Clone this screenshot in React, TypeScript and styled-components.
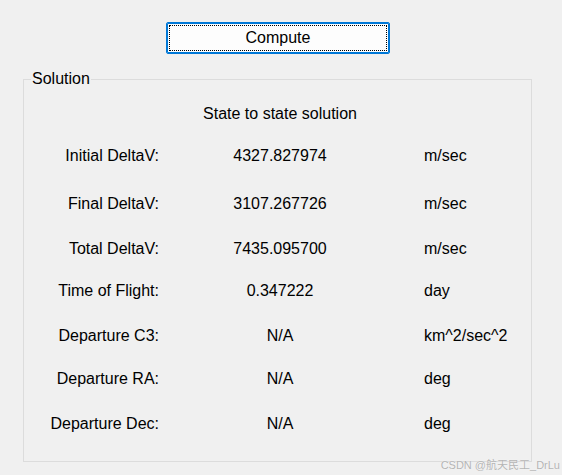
import React from 'react';
import styled, { createGlobalStyle } from 'styled-components';

const GlobalStyle = createGlobalStyle`
  html, body {
    margin: 0;
    padding: 0;
    background: #f0f0f0;
  }
  body {
    font-family: "Liberation Sans", Arial, sans-serif;
    font-size: 16px;
    color: #000;
  }
`;

const Window = styled.div`
  position: relative;
  width: 562px;
  height: 475px;
  padding: 22px 0 0 23px;
  box-sizing: border-box;
  overflow: hidden;
`;

const ComputeButton = styled.button`
  display: block;
  margin-left: 143px;
  width: 224px;
  height: 32px;
  background: #fdfdfd;
  border: 1px solid #0078d7;
  box-shadow: inset 0 0 0 1px #0078d7;
  border-radius: 2px;
  outline: 1px dotted #000;
  outline-offset: -4px;
  font-family: "Liberation Sans", Arial, sans-serif;
  font-size: 16px;
  color: #000;
  padding: 0;
  cursor: pointer;
`;

const GroupBox = styled.fieldset`
  margin: 16px 0 0 0;
  width: 509px;
  box-sizing: border-box;
  border: 1px solid #dcdcdc;
  border-radius: 0;
  padding: 16px 0 27px 0;
`;

const Legend = styled.legend`
  margin-left: 7px;
  padding: 0 1px;
  font-size: 16px;
  line-height: 18px;
`;

const Grid = styled.div`
  display: grid;
  grid-template-columns: 135px 242px 1fr;
  line-height: 20px;
`;

const Header = styled.div`
  grid-column: 2;
  text-align: center;
`;

const Label = styled.div<{ $top: number }>`
  grid-column: 1;
  text-align: right;
  margin-top: ${(p) => p.$top}px;
  white-space: nowrap;
`;

const Value = styled.div<{ $top: number }>`
  grid-column: 2;
  text-align: center;
  margin-top: ${(p) => p.$top}px;
`;

const Unit = styled.div<{ $top: number }>`
  grid-column: 3;
  padding-left: 23px;
  margin-top: ${(p) => p.$top}px;
  white-space: nowrap;
`;

const Watermark = styled.div`
  position: absolute;
  right: 2px;
  bottom: 3px;
  font-family: "Liberation Sans", "Noto Sans CJK SC", sans-serif;
  font-size: 11px;
  color: #b4b4b4;
  text-shadow: 0 0 1px #fff;
`;

const rows = [
  { label: 'Initial DeltaV:', value: '4327.827974', unit: 'm/sec', top: 22 },
  { label: 'Final DeltaV:', value: '3107.267726', unit: 'm/sec', top: 28 },
  { label: 'Total DeltaV:', value: '7435.095700', unit: 'm/sec', top: 25 },
  { label: 'Time of Flight:', value: '0.347222', unit: 'day', top: 22 },
  { label: 'Departure C3:', value: 'N/A', unit: 'km^2/sec^2', top: 25 },
  { label: 'Departure RA:', value: 'N/A', unit: 'deg', top: 23 },
  { label: 'Departure Dec:', value: 'N/A', unit: 'deg', top: 25 },
];

const App: React.FC = () => {
  return (
    <>
      <GlobalStyle />
      <Window>
        <ComputeButton>Compute</ComputeButton>
        <GroupBox>
          <Legend>Solution</Legend>
          <Grid>
            <Header>State to state solution</Header>
            {rows.map((r) => (
              <React.Fragment key={r.label}>
                <Label $top={r.top}>{r.label}</Label>
                <Value $top={r.top}>{r.value}</Value>
                <Unit $top={r.top}>{r.unit}</Unit>
              </React.Fragment>
            ))}
          </Grid>
        </GroupBox>
        <Watermark>CSDN @航天民工_DrLu</Watermark>
      </Window>
    </>
  );
};

export default App;
